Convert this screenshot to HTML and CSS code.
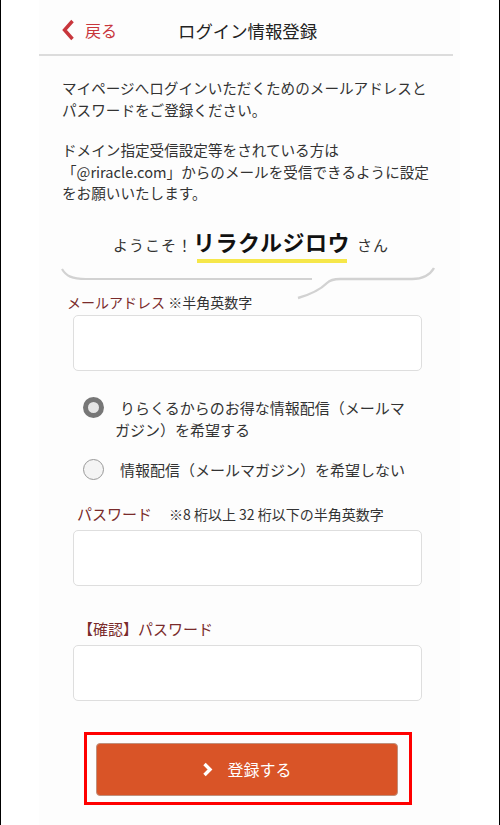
FILE: index.html
```html
<!DOCTYPE html>
<html lang="ja">
<head>
<meta charset="utf-8">
<link rel="stylesheet" href="styles.css">
</head>
<body>
<div class="frame">
  <div class="column">
    <header class="header">
      <a class="back">
        <svg class="back-icon" width="14" height="22" viewBox="0 0 14 22"><path d="M11.5 2 L3.5 11 L11.5 20" fill="none" stroke="#c8363c" stroke-width="3.4"/></svg>
        <span>戻る</span>
      </a>
      <h1 class="title">ログイン情報登録</h1>
    </header>

    <div class="intro">
      <p>マイページへログインいただくためのメールアドレスと<br>パスワードをご登録ください。</p>
      <p>ドメイン指定受信設定等をされている方は<br>「@riracle.com」からのメールを受信できるように設定<br>をお願いいたします。</p>
    </div>

    <div class="welcome">
      <span class="w-small">ようこそ！</span><span class="w-name">リラクルジロウ</span><span class="w-small w-san">さん</span>
      <svg class="bubble" width="380" height="36" viewBox="0 0 380 36">
        <path d="M2 3 C6 10 12 13 26 13 L252 13" fill="none" stroke="#d2d2d2" stroke-width="2.2"/>
        <path d="M238 32 C252 28 262 22 267 17 C270 14 273 13 280 13 L352 13 C364 13 370 9 374 2" fill="none" stroke="#d2d2d2" stroke-width="2.4"/>
      </svg>
    </div>

    <div class="field">
      <div class="label label-email"><span class="lbl">メールアドレス</span> <span class="note">※半角英数字</span></div>
      <div class="input input-email"></div>
    </div>

    <div class="radios">
      <div class="radio">
        <span class="dot checked"></span>
        <span class="radio-text">りらくるからのお得な情報配信（メールマ<br><span class="wrap">ガジン）を希望する</span></span>
      </div>
      <div class="radio">
        <span class="dot"></span>
        <span class="radio-text">情報配信（メールマガジン）を希望しない</span>
      </div>
    </div>

    <div class="field">
      <div class="label label-pw"><span class="lbl">パスワード</span><span class="note note-pw">※8 桁以上 32 桁以下の半角英数字</span></div>
      <div class="input"></div>
    </div>

    <div class="field field-confirm">
      <div class="label label-confirm"><span class="lbl">【確認】パスワード</span></div>
      <div class="input"></div>
    </div>

    <div class="submit-wrap">
      <div class="submit-outline">
        <button class="submit">
          <svg width="11" height="15" viewBox="0 0 11 15"><path d="M2.5 2 L8 7.5 L2.5 13" fill="none" stroke="#fff" stroke-width="3.4"/></svg>
          <span>登録する</span>
        </button>
      </div>
    </div>
  </div>
</div>
</body>
</html>
```

FILE: styles.css
```css
* { box-sizing: border-box; }
html, body { margin: 0; padding: 0; background: #fff; }
body {
  font-family: "Noto Sans CJK JP", "Noto Sans", sans-serif;
  color: #333;
}
.frame {
  width: 500px;
  height: 825px;
  border-left: 1px solid #000;
  border-right: 1px solid #000;
  overflow: hidden;
}
.column {
  margin: 0 39px 0 38px;
  background: #fdfdfd;
  height: 825px;
  padding-top: 10px;
}
.header {
  height: 46px;
  margin-right: 7px;
  border-bottom: 2px solid #dcdcdc;
  display: flex;
  align-items: center;
  padding-bottom: 4px;
}
.back {
  display: flex;
  align-items: center;
  gap: 10px;
  margin-left: 22px;
  color: #c8363c;
  font-size: 16px;
}
.title {
  margin: 0 0 0 61px;
  font-size: 17.4px;
  font-weight: normal;
  color: #222;
}
.intro {
  padding: 21px 10px 0 23px;
  font-size: 14.6px;
  line-height: 21.5px;
  color: #333;
}
.intro p { margin: 0 0 19px; }
.intro p:last-child { margin-bottom: 0; }
.welcome {
  position: relative;
  height: 87px;
  padding-top: 22px;
  line-height: 30px;
  text-align: center;
  margin-right: 7px;
  padding-left: 10px;
}
.w-small { font-size: 15px; color: #333; letter-spacing: 1px; }
.w-san { margin-left: 7px; }
.w-name {
  font-size: 22px;
  font-weight: bold;
  color: #111;
  letter-spacing: 0.5px;
  background: linear-gradient(#f6e74a, #f6e74a) no-repeat 4px 100% / 150px 4px;
  padding-bottom: 6px;
}
.bubble {
  position: absolute;
  left: 21px;
  top: 62px;
}
.label { font-size: 15px; line-height: 22px; }
.lbl { color: #7a2b2b; }
.note { color: #333; font-size: 14px; }
.label-email { padding-left: 28px; font-size: 14px; }
.label-pw { padding-left: 38px; }
.note-pw { margin-left: 17px; }
.label-confirm { padding-left: 39px; }
.input {
  margin: 5px 0 0 34px;
  width: 349px;
  height: 56px;
  border: 1px solid #dedede;
  border-radius: 5px;
  background: #fff;
}
.input-email { margin-top: 2px; }
.radios { padding: 26px 0 22px 44px; }
.radio {
  display: flex;
  align-items: flex-start;
  font-size: 15px;
  line-height: 22px;
  color: #333;
}
.radio + .radio { margin-top: 18px; }
.dot {
  width: 21px;
  height: 21px;
  border-radius: 50%;
  border: 1px solid #999;
  background: #f4f4f4;
  flex: none;
}
.dot.checked {
  background: #e6e6e6;
  border: 5px solid #777;
}
.radio-text { margin-left: 16px; }
.wrap { margin-left: -5px; }
.field-confirm { margin-top: 32px; }
.submit-wrap { padding: 31px 0 0 45px; }
.submit-outline {
  width: 328px;
  height: 73px;
  border: 3px solid #ff0000;
  padding: 8px 0 0 9px;
}
.submit {
  width: 302px;
  height: 53px;
  background: #d95427;
  border: 1px solid #c0907c;
  border-radius: 4px;
  color: #fff;
  font-family: inherit;
  font-size: 16px;
  display: flex;
  align-items: center;
  justify-content: center;
  gap: 14px;
  padding: 0;
}
```
